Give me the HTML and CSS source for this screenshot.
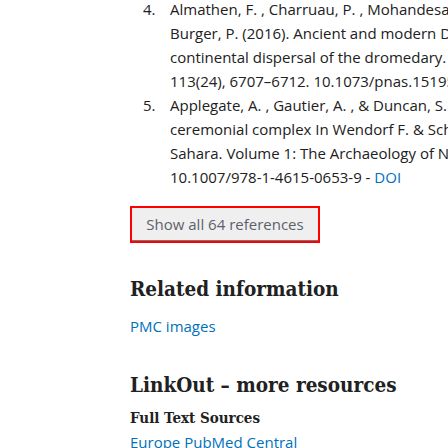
FILE: index.html
```html
<!DOCTYPE html>
<html>
<head>
<meta charset="utf-8">
<link rel="stylesheet" href="styles.css">
</head>
<body>
<div class="page">
  <ol class="refs">
    <li class="ref">
      <span class="num">4.</span>
      <span class="text">Almathen, F. , Charruau, P. , Mohandesan, E. , Mwacharo, J. M. ,<br>Burger, P. (2016). Ancient and modern DNA reveal dynamics of<br>continental dispersal of the dromedary. Proceedings of the National<br>113(24), 6707–6712. 10.1073/pnas.1519508113</span>
    </li>
    <li class="ref">
      <span class="num">5.</span>
      <span class="text">Applegate, A. , Gautier, A. , &amp; Duncan, S. (2001). The north tumuli<br>ceremonial complex In Wendorf F. &amp; Schild R. (Eds.), Holocene<br>Sahara. Volume 1: The Archaeology of Nabta Playa (pp. 468–488).<br>10.1007/978-1-4615-0653-9 - <a href="#">DOI</a></span>
    </li>
  </ol>
  <div class="show-all-wrap">
    <button class="show-all">Show all 64 references</button>
  </div>
  <h2 class="section-title related">Related information</h2>
  <a class="link" href="#">PMC images</a>
  <h2 class="section-title linkout">LinkOut – more resources</h2>
  <h3 class="sub-title">Full Text Sources</h3>
  <a class="link first" href="#">Europe PubMed Central</a>
</div>
</body>
</html>
```
FILE: styles.css
```css
html, body {
  margin: 0;
  padding: 0;
  background: #fff;
  overflow: hidden;
}
.page {
  width: 448px;
  height: 448px;
  overflow: hidden;
  box-sizing: border-box;
  padding-left: 130px;
  font-family: "Open Sans", "Noto Sans", sans-serif;
  font-size: 15px;
  color: #212121;
}
.refs {
  list-style: none;
  margin: -3px 0 0;
  padding: 0 0 0 13px;
  line-height: 24px;
}
.ref {
  display: flex;
  white-space: nowrap;
}
.num {
  flex: 0 0 27px;
}
.text a {
  color: #0071bc;
  text-decoration: none;
}
.show-all-wrap {
  margin-top: 17px;
  width: 190px;
  height: 37px;
  box-sizing: border-box;
  border: 2px solid #ff0000;
  background: #efefef;
}
.show-all {
  display: block;
  appearance: none;
  width: 100%;
  height: 100%;
  margin: 0;
  padding: 0;
  box-sizing: border-box;
  background: #efefef;
  border: 0;
  border-bottom: 1px solid #767676;
  font-family: "Open Sans", "Noto Sans", sans-serif;
  font-size: 15px;
  color: #5b616b;
}
.section-title {
  font-family: "DejaVu Serif Condensed", "DejaVu Serif", serif;
  font-weight: bold;
  font-size: 20.5px;
  line-height: 28px;
  color: #212121;
  margin: 0;
  white-space: nowrap;
}
.related {
  margin-top: 32px;
}
.link {
  display: block;
  color: #0071bc;
  text-decoration: none;
  line-height: 24px;
  margin-top: 11px;
}
.linkout {
  margin-top: 33px;
}
.sub-title {
  font-family: "DejaVu Serif Condensed", "DejaVu Serif", serif;
  font-weight: bold;
  font-size: 15px;
  line-height: 20px;
  color: #212121;
  margin: 9px 0 0;
}
.link.first {
  margin-top: 2px;
}
```
